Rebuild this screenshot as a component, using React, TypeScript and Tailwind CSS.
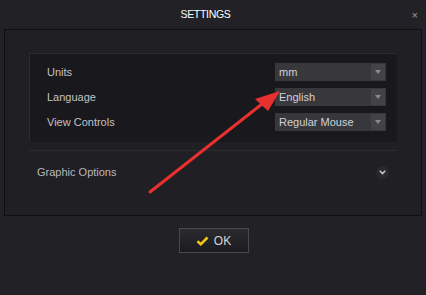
export default function App() {
  const rows = [
    { label: "Units", value: "mm" },
    { label: "Language", value: "English" },
    { label: "View Controls", value: "Regular Mouse" },
  ];

  return (
    <div
      className="relative w-[426px] h-[295px] bg-[#222126] flex flex-col text-[#c9c8cc] overflow-hidden"
      style={{ fontFamily: '"Liberation Sans", Arial, sans-serif' }}
    >
      {/* title bar */}
      <div className="relative h-[29px] flex items-center justify-center pr-[15px]">
        <span className="text-[10.5px] text-white tracking-[-0.3px]">SETTINGS</span>
        <span className="absolute right-[8px] top-[7px] text-[11px] text-[#9a999e]">×</span>
      </div>

      {/* main panel */}
      <div className="mx-[4px] h-[187px] border border-[#0f0f12] bg-[#201f24] px-[24px] pt-[23px]">
        <div className="h-[89px] bg-[#19181c] border-t border-[#2c2b30] border-l border-[#1c1b1f] flex flex-col gap-[7px] pt-[9px] pl-[17px] pr-[11px]">
          {rows.map((r) => (
            <div key={r.label} className="flex items-center justify-between h-[18px]">
              <span className="text-[11px] text-[#c3c2c6]">{r.label}</span>
              <div className="w-[111px] h-[18px] bg-[#38373c] flex items-center">
                <span className="flex-1 pl-[4px] text-[11px] text-[#d2d1d5]">{r.value}</span>
                <div className="w-[14px] h-[16px] mr-[1px] bg-[#434247] flex items-center justify-center">
                  <svg width="6" height="4" viewBox="0 0 6 4">
                    <path d="M0 0h6L3 4z" fill="#8a898e" />
                  </svg>
                </div>
              </div>
            </div>
          ))}
        </div>
        <div className="mt-[8px] h-px bg-[#2c2b30]" />
        <div className="flex items-center justify-between h-[42px] pl-[8px] pr-[8px]">
          <span className="text-[11px] text-[#b9b8bc]">Graphic Options</span>
          <div className="w-[13px] h-[13px] rounded-full bg-[#2a292e] flex items-center justify-center">
            <svg width="7" height="5" viewBox="0 0 7 5">
              <path d="M0.8 0.8L3.5 3.6 6.2 0.8" stroke="#c8c7cc" strokeWidth="1.5" fill="none" />
            </svg>
          </div>
        </div>
      </div>

      {/* OK */}
      <div className="flex justify-center mt-[12px] pl-[1px]">
        <button className="w-[70px] h-[25px] border border-[#4a494e] bg-gradient-to-b from-[#2b2a2f] to-[#1c1b1f] flex items-center justify-center gap-[5px]">
          <svg width="13" height="10" viewBox="0 0 13 10">
            <path d="M1.5 5.2L4.8 8.2 11.5 1.5" stroke="#f2c619" strokeWidth="2.6" fill="none" />
          </svg>
          <span className="text-[12px] text-[#d6d5d9]">OK</span>
        </button>
      </div>

      {/* annotation arrow */}
      <svg className="absolute inset-0 pointer-events-none" width="426" height="295" viewBox="0 0 426 295">
        <path d="M150 192 L262 104" stroke="#e8312f" strokeWidth="3" strokeLinecap="round" />
        <path d="M280 91 L255 99 L268 111 Z" fill="#e8312f" />
      </svg>
    </div>
  );
}
